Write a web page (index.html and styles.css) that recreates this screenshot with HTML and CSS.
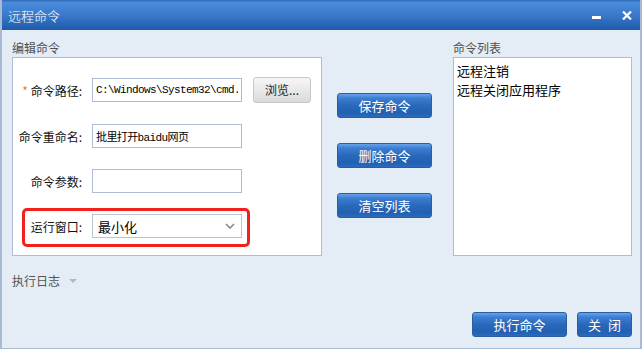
FILE: index.html
```html
<!DOCTYPE html>
<html lang="zh-CN">
<head>
    <meta charset="UTF-8">
    <title>远程命令</title>
    <link rel="stylesheet" href="styles.css">
</head>
<body>
    <div class="window">
        <div class="titlebar">
            <span class="title">远程命令</span>
            <span class="win-min"></span>
            <span class="win-close">
                <svg width="10" height="9" viewBox="0 0 10 9"><path d="M1 0.5 L9 8.5 M9 0.5 L1 8.5" stroke="#fff" stroke-width="2.2"/></svg>
            </span>
        </div>
        <div class="content">
            <div class="main">
                <div class="edit-col">
                    <div class="group-label">编辑命令</div>
                    <div class="edit-box">
                        <div class="form-row">
                            <label><span class="required">*</span> 命令路径:</label>
                            <input type="text" class="mono" value="C:\Windows\System32\cmd.exe">
                            <div class="gray-btn">浏览...</div>
                        </div>
                        <div class="form-row">
                            <label>命令重命名:</label>
                            <input type="text" class="mono" value="批里打开baidu网页">
                        </div>
                        <div class="form-row">
                            <label>命令参数:</label>
                            <input type="text" value="">
                        </div>
                        <div class="form-row highlight">
                            <label>运行窗口:</label>
                            <div class="select">
                                <span>最小化</span>
                                <svg width="10" height="6" viewBox="0 0 10 6"><path d="M1 1 L5 5 L9 1" fill="none" stroke="#8a8a8a" stroke-width="1.6"/></svg>
                            </div>
                        </div>
                    </div>
                </div>
                <div class="action-col">
                    <div class="blue-btn">保存命令</div>
                    <div class="blue-btn">删除命令</div>
                    <div class="blue-btn">清空列表</div>
                </div>
                <div class="list-col">
                    <div class="group-label">命令列表</div>
                    <div class="list-box">
                        <div class="list-item">远程注销</div>
                        <div class="list-item">远程关闭应用程序</div>
                    </div>
                </div>
            </div>
            <div class="log-label">执行日志<span class="caret"></span></div>
            <div class="footer">
                <div class="blue-btn wide">执行命令</div>
                <div class="blue-btn narrow">关 闭</div>
            </div>
        </div>
    </div>
</body>
</html>
```
FILE: styles.css
```css
* {
    margin: 0;
    padding: 0;
}
body {
    background-color: #fff;
    font-family: "Noto Sans CJK SC", "Liberation Sans", sans-serif;
}
.window {
    width: 642px;
    height: 349px;
    box-sizing: border-box;
    border: 2px solid #a9bbd3;
    border-top: 0;
    border-bottom-width: 1px;
    background-color: #e4ecf6;
    display: flex;
    flex-direction: column;
}
.titlebar {
    flex: none;
    height: 30px;
    box-sizing: border-box;
    padding: 0 8px 0 6px;
    display: flex;
    align-items: center;
    background: linear-gradient(#2f68b4, #4a8bdb 8%, #3b79ca 50%, #2563b4 85%, #1f5aa6);
    color: #fff;
}
.titlebar .title {
    flex: 1;
    font-size: 13px;
    font-weight: 300;
}
.win-min {
    width: 9px;
    height: 3px;
    margin-top: 4px;
    background-color: #fff;
}
.win-close {
    margin-left: 21px;
    display: flex;
}

.content {
    flex: 1;
    padding: 8px 8px 11px 10px;
    display: flex;
    flex-direction: column;
}
.main {
    display: flex;
}
.group-label {
    height: 19px;
    line-height: 19px;
    font-size: 12px;
    color: #4f4f4f;
}
.edit-col {
    width: 310px;
}
.edit-box {
    height: 199px;
    box-sizing: border-box;
    border: 1px solid #a9bdd8;
    background-color: #fff;
    padding-top: 19px;
}
.form-row {
    display: flex;
    align-items: center;
    margin-top: 21px;
}
.form-row:first-child {
    margin-top: 0;
}
.form-row label {
    width: 69px;
    margin-right: 10px;
    text-align: right;
    font-size: 12px;
    color: #111;
    white-space: nowrap;
}
.required {
    color: #f07a1a;
}
.form-row input {
    width: 150px;
    height: 24px;
    box-sizing: border-box;
    border: 1px solid #a9bdd6;
    padding: 0 3px;
    font-size: 12px;
    color: #000;
    outline: none;
    font-family: "Noto Sans CJK SC", sans-serif;
}
.form-row input.mono {
    font-family: "Liberation Mono", "Noto Sans CJK SC", monospace;
    font-size: 11px;
    letter-spacing: -0.6px;
}
.gray-btn {
    width: 58px;
    height: 26px;
    box-sizing: border-box;
    margin-left: 11px;
    border: 1px solid #c4c8cc;
    border-radius: 3px;
    background: linear-gradient(#f6f6f6, #e6e6e6 60%, #dadada);
    font-size: 12px;
    line-height: 24px;
    text-align: center;
    color: #222;
}
.form-row.highlight {
    width: fit-content;
    margin: 15px 0 0 9px;
    border: 3px solid #f2211b;
    border-radius: 5px;
    padding: 3px 5px 6px 0;
}
.form-row.highlight label {
    width: 57px;
}
.select {
    width: 150px;
    height: 24px;
    box-sizing: border-box;
    border: 1px solid #b8c4d2;
    padding: 0 6px 0 5px;
    display: flex;
    align-items: center;
    justify-content: space-between;
    font-size: 13px;
    color: #000;
}

.action-col {
    width: 95px;
    margin-left: 15px;
    padding-top: 55px;
    display: flex;
    flex-direction: column;
    gap: 25px;
}
.blue-btn {
    height: 25px;
    box-sizing: border-box;
    border: 1px solid #2b5e9e;
    border-radius: 3px;
    background: linear-gradient(#66a3ea, #3c7ed2 18%, #2a68ba 50%, #2260b1 80%, #2b69bb);
    color: #fff;
    font-size: 13px;
    line-height: 23px;
    text-align: center;
}
.list-col {
    width: 179px;
    margin-left: 21px;
}
.list-box {
    height: 199px;
    box-sizing: border-box;
    border: 1px solid #a9bdd8;
    background-color: #fff;
    padding: 3px 3px;
}
.list-item {
    font-size: 13px;
    line-height: 19px;
    color: #000;
}

.log-label {
    margin-top: 16px;
    height: 18px;
    line-height: 18px;
    font-size: 12px;
    color: #555;
    display: flex;
    align-items: center;
}
.caret {
    margin-left: 9px;
    border-left: 4px solid transparent;
    border-right: 4px solid transparent;
    border-top: 4px solid #b4b8be;
}
.footer {
    margin-top: auto;
    display: flex;
    justify-content: flex-end;
    gap: 10px;
}
.blue-btn.wide {
    width: 95px;
}
.blue-btn.narrow {
    width: 55px;
    word-spacing: 4px;
}
```
